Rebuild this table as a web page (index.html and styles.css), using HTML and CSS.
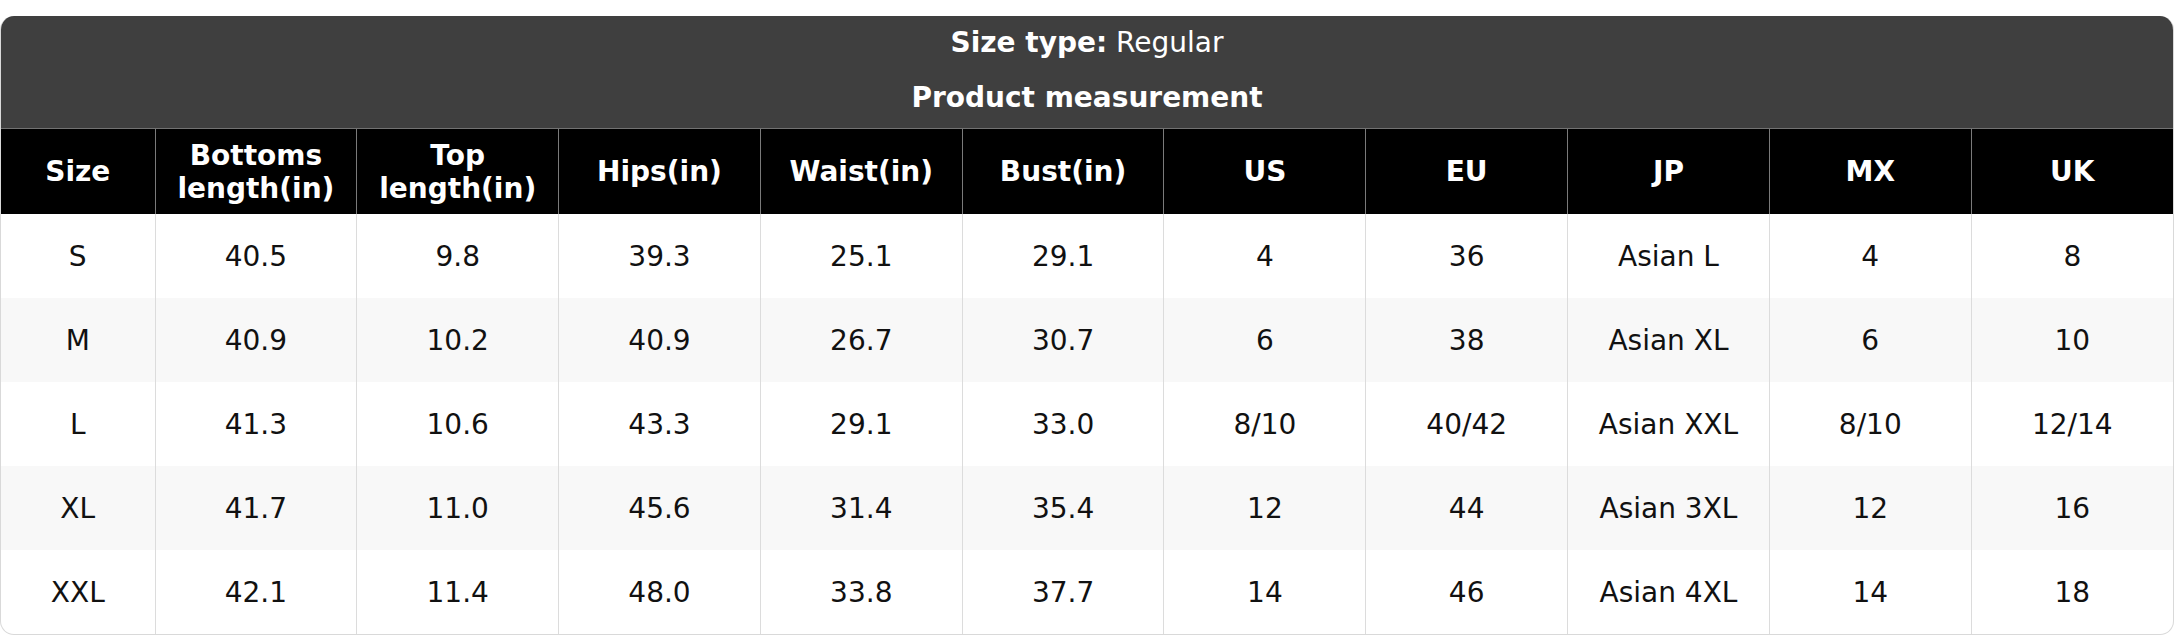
FILE: index.html
```html
<!DOCTYPE html>
<html lang="en">
<head>
<meta charset="utf-8">
<title>Size chart</title>
<link rel="stylesheet" href="styles.css">
</head>
<body>
<div class="card">
  <div class="caption">
    <div class="size-type"><b>Size type:</b> Regular</div>
    <div class="title">Product measurement</div>
  </div>
  <table class="chart">
    <colgroup>
      <col class="c-size">
      <col><col><col><col><col><col><col><col><col><col>
    </colgroup>
    <thead>
      <tr>
        <th>Size</th>
        <th>Bottoms<br>length(in)</th>
        <th>Top<br>length(in)</th>
        <th>Hips(in)</th>
        <th>Waist(in)</th>
        <th>Bust(in)</th>
        <th>US</th>
        <th>EU</th>
        <th>JP</th>
        <th>MX</th>
        <th>UK</th>
      </tr>
    </thead>
    <tbody>
      <tr><td>S</td><td>40.5</td><td>9.8</td><td>39.3</td><td>25.1</td><td>29.1</td><td>4</td><td>36</td><td>Asian L</td><td>4</td><td>8</td></tr>
      <tr><td>M</td><td>40.9</td><td>10.2</td><td>40.9</td><td>26.7</td><td>30.7</td><td>6</td><td>38</td><td>Asian XL</td><td>6</td><td>10</td></tr>
      <tr><td>L</td><td>41.3</td><td>10.6</td><td>43.3</td><td>29.1</td><td>33.0</td><td>8/10</td><td>40/42</td><td>Asian XXL</td><td>8/10</td><td>12/14</td></tr>
      <tr><td>XL</td><td>41.7</td><td>11.0</td><td>45.6</td><td>31.4</td><td>35.4</td><td>12</td><td>44</td><td>Asian 3XL</td><td>12</td><td>16</td></tr>
      <tr><td>XXL</td><td>42.1</td><td>11.4</td><td>48.0</td><td>33.8</td><td>37.7</td><td>14</td><td>46</td><td>Asian 4XL</td><td>14</td><td>18</td></tr>
    </tbody>
  </table>
</div>
</body>
</html>
```

FILE: styles.css
```css
html, body {
  margin: 0;
  padding: 0;
  background: #fff;
}

body {
  padding-top: 16px;
  font-family: "DejaVu Sans", "Liberation Sans", sans-serif;
  font-size: 28px;
  line-height: 33px;
  color: #111;
}

.card {
  width: 2174px;
  box-sizing: border-box;
  border: 1px solid #d9d9d9;
  border-top: none;
  border-radius: 14px;
  overflow: hidden;
}

.caption {
  background: #3f3f3f;
  color: #fff;
  text-align: center;
  padding: 10px 0 14px;
}

.size-type {
  font-weight: normal;
  margin-bottom: 22px;
}

.size-type b {
  font-weight: bold;
}

.title {
  font-weight: bold;
}

.chart {
  width: 100%;
  table-layout: fixed;
  border-collapse: collapse;
  border-spacing: 0;
}

.c-size {
  width: 154px;
}

.chart th {
  background: #000;
  color: #fff;
  font-weight: bold;
  height: 85px;
  padding: 0;
  text-align: center;
  vertical-align: middle;
  border-top: 1px solid #727272;
  border-left: 1px solid #7a7a7a;
}

.chart td {
  height: 84px;
  padding: 0;
  text-align: center;
  vertical-align: middle;
  border-left: 1px solid #dcdcdc;
}

.chart th:first-child,
.chart td:first-child {
  border-left: none;
}

.chart tbody tr:nth-child(even) td {
  background: #f8f8f8;
}
```
